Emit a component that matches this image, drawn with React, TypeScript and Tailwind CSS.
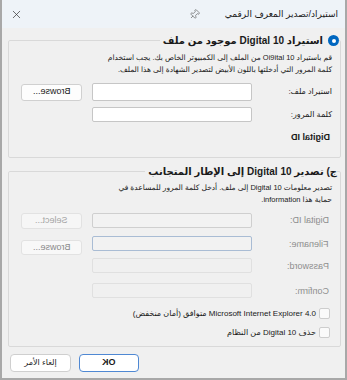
import { X, Pin } from "lucide-react";

function Mirror({ children, className = "" }: { children: React.ReactNode; className?: string }) {
  return (
    <span dir="ltr" className={`inline-block -scale-x-100 ${className}`}>
      {children}
    </span>
  );
}

function Radio() {
  return (
    <span className="flex items-center justify-center w-[11px] h-[11px] rounded-full bg-[#0067c0]">
      <span className="w-[4px] h-[4px] rounded-full bg-white" />
    </span>
  );
}

function Check() {
  return <span className="w-[11px] h-[11px] rounded-[2px] border border-[#cdcdcd] bg-[#fafafa] shrink-0" />;
}

export default function App() {
  return (
    <div
      dir="rtl"
      className="w-[347px] h-[380px] bg-[#f0f0f0] border-l-2 border-r-2 border-b-2 border-[#a8a8a8] flex flex-col font-['Liberation_Sans','DejaVu_Sans',sans-serif] text-[#1a1a1a] overflow-hidden"
    >
      {/* title bar */}
      <div className="h-[28px] shrink-0 bg-[#eef3f8] flex items-center pr-[7px] pl-[8px]">
        <span className="w-[138px] text-[9px] leading-none">استيراد/تصدير المعرف الرقمي</span>
        <Pin size={11} strokeWidth={1.3} color="#555" className="rotate-45" />
        <X size={13} strokeWidth={1.3} color="#333" className="mr-auto" />
      </div>

      <div className="flex flex-col pl-[6px] pr-[4px]">
        {/* group 1 */}
        <fieldset className="mt-[6px] h-[124px] border border-[#d9d9d9] rounded-[2px]">
          <legend className="flex items-center gap-[5px] mr-[1px] pl-[3px] text-[10px] leading-[13px] font-bold">
            <Radio />
            <span>استيراد 10 Digital موجود من ملف</span>
          </legend>
          <p className="pt-[5px] pr-[8px] text-[7.5px] leading-[12px]">
            قم باستيراد 10 Oi9ital من الملف إلى الكمبيوتر الخاص بك. يجب استخدام
            <br />
            كلمة المرور التي أدخلتها باللون الأبيض لتصدير الشهادة إلى هذا الملف.
          </p>
          <div className="mt-[7px] pr-[8px] flex items-center h-[18px]">
            <span className="w-[80px] text-[8px]">استيراد ملف:</span>
            <span className="w-[160px] h-[18px] bg-white border border-[#c6c6c6] rounded-[2px]" />
            <span className="mr-[10px] w-[61px] h-[17px] bg-[#fdfdfd] border border-[#d0d0d0] rounded-[3px] flex items-center justify-center text-[9px]">
              <Mirror>Browse...</Mirror>
            </span>
          </div>
          <div className="mt-[6px] pr-[8px] flex items-center h-[15px]">
            <span className="w-[80px] text-[8px]">كلمة المرور:</span>
            <span className="w-[160px] h-[15px] bg-white border border-[#c6c6c6] rounded-[2px]" />
          </div>
          <div className="mt-[9px] pr-[10px] text-[9px] leading-[12px] font-bold">
            <Mirror>Digital ID</Mirror>
          </div>
        </fieldset>

        {/* group 2 */}
        <fieldset className="mt-[7px] h-[182px] border border-[#d9d9d9] rounded-[2px]">
          <legend className="mr-[3px] pl-[3px] text-[10px] leading-[13px] font-bold">
            ج) تصدير 10 Digital إلى الإطار المتجانب
          </legend>
          <p className="pt-[4px] pr-[8px] text-[7.5px] leading-[12px]">
            تصدير معلومات 10 Digital إلى ملف. أدخل كلمة المرور للمساعدة في
            <br />
            حماية هذا information.
          </p>
          <div className="mt-[7px] pr-[8px] flex items-center h-[15px]">
            <span className="w-[80px] pr-[3px] text-[9px] text-[#8e8e8e]">
              <Mirror>Digital ID:</Mirror>
            </span>
            <span className="w-[160px] h-[15px] bg-[#f2f2f2] border border-[#cfcfcf] rounded-[2px]" />
            <span className="mr-[10px] w-[61px] h-[16px] bg-[#f6f6f6] border border-[#e2e2e2] rounded-[3px] flex items-center justify-center text-[9px] text-[#a5a5a5]">
              <Mirror>Select...</Mirror>
            </span>
          </div>
          <div className="mt-[8px] pr-[8px] flex items-start h-[15px]">
            <span className="w-[80px] pr-[3px] pt-[2px] text-[9px] text-[#8e8e8e]">
              <Mirror>Filename:</Mirror>
            </span>
            <span className="w-[160px] h-[15px] bg-[#f2f2f2] border border-[#a9bcd4] rounded-[2px]" />
            <span className="mr-[10px] mt-[4px] w-[61px] h-[15px] bg-[#f8f8f8] border border-[#e2e2e2] rounded-[3px] flex items-center justify-center text-[9px] text-[#8a8a8a]">
              <Mirror>Browse...</Mirror>
            </span>
          </div>
          <div className="mt-[7px] pr-[8px] flex items-center h-[15px]">
            <span className="w-[80px] pr-[3px] pt-[2px] text-[9px] text-[#8e8e8e]">
              <Mirror>Password:</Mirror>
            </span>
            <span className="w-[160px] h-[15px] bg-[#f0f0f0] border border-[#e0e0e0] rounded-[2px]" />
          </div>
          <div className="mt-[10px] pr-[8px] flex items-center h-[15px]">
            <span className="w-[80px] pr-[3px] pt-[2px] text-[9px] text-[#8e8e8e]">
              <Mirror>Confirm:</Mirror>
            </span>
            <span className="w-[160px] h-[15px] bg-[#f0f0f0] border border-[#e0e0e0] rounded-[2px]" />
          </div>
          <div className="mt-[10px] pr-[10px] flex items-center gap-[3px] h-[11px] text-[8px]">
            <Check />
            <span>Microsoft Internet Explorer 4.0 متوافق (أمان منخفض)</span>
          </div>
          <div className="mt-[8px] pr-[10px] flex items-center gap-[3px] h-[11px] text-[8px]">
            <Check />
            <span>حذف 10 Digital من النظام</span>
          </div>
        </fieldset>

        {/* footer */}
        <div className="mt-[7px] flex justify-end gap-[8px] pl-[2px]">
          <span className="w-[60px] h-[18px] bg-white border-[1.5px] border-[#4f88d3] rounded-[4px] flex items-center justify-center text-[9px] font-bold">
            <Mirror>OK</Mirror>
          </span>
          <span className="w-[61px] h-[18px] bg-white border border-[#cfcfcf] rounded-[4px] flex items-center justify-center text-[8px]">
            إلغاء الأمر
          </span>
        </div>
      </div>
    </div>
  );
}
